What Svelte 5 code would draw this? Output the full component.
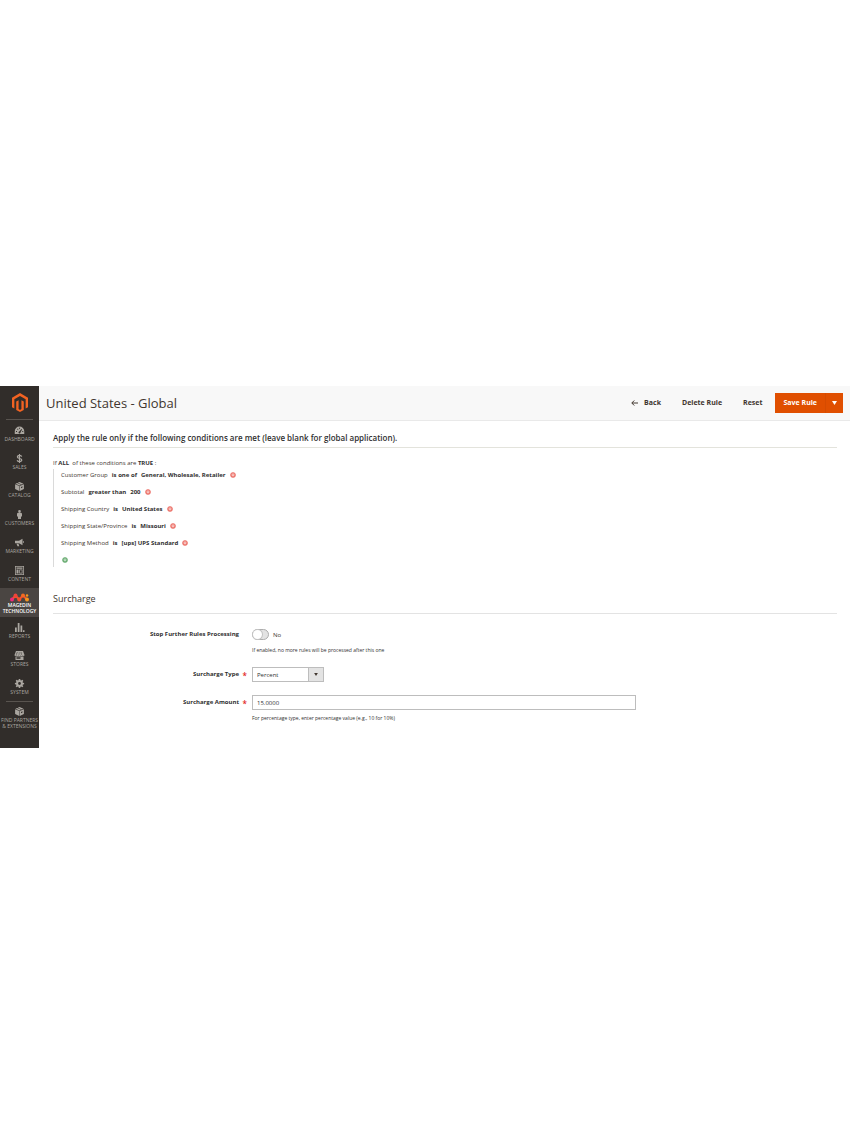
<script lang="ts">
  const menu = [
    { id: "dashboard", lines: ["Dashboard"] },
    { id: "sales", lines: ["Sales"] },
    { id: "catalog", lines: ["Catalog"] },
    { id: "customers", lines: ["Customers"] },
    { id: "marketing", lines: ["Marketing"] },
    { id: "content", lines: ["Content"] },
    { id: "magedin", lines: ["Magedin", "Technology"], active: true },
    { id: "reports", lines: ["Reports"] },
    { id: "stores", lines: ["Stores"] },
    { id: "system", lines: ["System"] },
    { id: "partners", lines: ["Find Partners", "& Extensions"] },
  ];

  let conditions = $state([
    { attribute: "Customer Group", operator: "is one of", value: "General, Wholesale, Retailer" },
    { attribute: "Subtotal", operator: "greater than", value: "200" },
    { attribute: "Shipping Country", operator: "is", value: "United States" },
    { attribute: "Shipping State/Province", operator: "is", value: "Missouri" },
    { attribute: "Shipping Method", operator: "is", value: "[ups] UPS Standard" },
  ]);
  let stopProcessing = $state(false);
  let surchargeType = $state("percent");
  let amount = $state("15.0000");

  function removeCondition(i: number) {
    conditions = conditions.filter((_, idx) => idx !== i);
  }
</script>

{#snippet menuIcon(id: string)}
  <svg class="menu-icon" viewBox="0 0 20 18" aria-hidden="true">
    {#if id === "dashboard"}
      <path fill-rule="evenodd" d="M10 1a9.500 9.500 0 0 0-9.500 9.500V16h19v-5.500A9.500 9.500 0 0 0 10 1zM3 10h2v2H3zM5.500 5.500h2v2h-2zM9 3.500h2v2H9zM15.500 10h2v2h-2zM14 6l1.200 1-3.200 5.500a2 2 0 1 1-2.500-1.500z" />
    {:else if id === "sales"}
      <path class="line" d="M14.500 5.200C14 3.500 12.500 2.800 10 2.800S5.800 3.800 5.800 5.800 8 8.500 10 9s4.500 1 4.500 3.200-2 3-4.500 3-4.300-.9-4.700-2.700M10 0v18" />
    {:else if id === "catalog" || id === "partners"}
      <path d="M10 0l8 3.500-3.600 1.400L6.600 1.600zM5.300 2.200l7.800 3.400L10 7 2 3.700zM1.200 4.600l8.300 3.600V18l-8.300-4zM10.500 8.200l8.300-3.600V14l-8.300 4zM13 10v2.500l3-1.400V8.600z" fill-rule="evenodd" />
    {:else if id === "customers"}
      <path d="M10 0a2.700 2.700 0 1 1 0 5.400A2.700 2.700 0 0 1 10 0zM7 5.500h6L15 7v6h-2v5H7v-5H5V7z" />
    {:else if id === "marketing"}
      <path d="M1 5.500h8l7-4v13l-7-4H1zM17 6c2.500 0 2.500 4 0 4zM4 11.500h4l1.500 5H6z" />
    {:else if id === "content"}
      <path fill-rule="evenodd" d="M1 0h18v18H1zM2.500 1.500v15h15v-15zM4 3h12v2.500H4zM4 7h4v8H4zM9.500 7H16v8H9.500zM11 8.500v5h3.500v-5z" />
    {:else if id === "reports"}
      <path d="M1 9h3.500v9H1zM6.500 0H10v18H6.500zM12 5h3.500v13H12zM17 14.500h3V18h-3z" />
    {:else if id === "stores"}
      <path fill-rule="evenodd" d="M3 0h14l3 8c0 2-3 2.500-4 .8-1 1.700-3 1.700-4 0-1 1.700-3 1.700-4 0-1 1.700-3 1.700-4 0C3 10.500 0 10 0 8zM5 2L3.500 7.500h1L6 2zM9 2l-.5 5.500h1V2zM12.500 2l.5 5.500h1L13.500 2zM2 11h16v7H2zM4 12.500v3h8v-3z" />
    {:else if id === "system"}
      <path fill-rule="evenodd" d="M8.600 0h2.800l.5 2.500 1.500.6L15.600 1.700l2 2-1.500 2.100.6 1.500 2.500.5v2.600l-2.500.5-.6 1.500 1.500 2.200-2 2-2.200-1.500-1.500.6-.5 2.300H8.600l-.5-2.300-1.500-.6-2.200 1.500-2-2 1.500-2.200-.6-1.500L.8 10.400V7.800l2.500-.5.6-1.500-1.500-2.100 2-2 2.200 1.400 1.500-.6zM10 6.200a2.800 2.800 0 1 0 0 5.600 2.800 2.800 0 0 0 0-5.600z" />
    {/if}
  </svg>
{/snippet}

<div class="admin">
  <aside class="sidebar">
    <a class="logo" href="#home" aria-label="Home">
      <svg viewBox="0 0 34 40" aria-hidden="true">
        <path d="M17 0l17 10v20l-5 3V13L17 6 5 13v20l-5-3V10zM14 15v19l3 1.700 3-1.700V15l5 3v18l-8 4-8-4V18z" />
      </svg>
    </a>
    <nav class="menu">
      {#each menu as item}
        <a class="menu-item {item.id}" class:active={item.active} href="#{item.id}">
          {#if item.id === "magedin"}
            <svg class="brand-icon" viewBox="0 0 38 18" aria-hidden="true">
              <path d="M4 13l7-8 7.500 8L26 5l8 8" fill="none" stroke="#f4512c" stroke-width="4" />
              <circle cx="4" cy="13" r="4" fill="#ee2a7b" />
              <circle cx="11" cy="5" r="4" fill="#f0443a" />
              <circle cx="18.500" cy="13" r="4" fill="#f4512c" />
              <circle cx="26" cy="5" r="4" fill="#f26a21" />
              <circle cx="34" cy="5" r="2.500" fill="#f7941d" />
              <circle cx="34" cy="13" r="4" fill="#f7941d" />
            </svg>
          {:else}
            {@render menuIcon(item.id)}
          {/if}
          {#each item.lines as line}
            <span>{line}</span>
          {/each}
        </a>
      {/each}
    </nav>
  </aside>

  <div class="page">
    <header class="page-header">
      <h1>United States - Global</h1>
      <div class="actions">
        <button class="action">
          <svg class="back-icon" viewBox="0 0 14 12" aria-hidden="true">
            <path d="M6.500 1L1.500 6l5 5M2 6h12" />
          </svg>
          Back
        </button>
        <button class="action">Delete Rule</button>
        <button class="action">Reset</button>
        <div class="split">
          <button class="save">Save Rule</button>
          <button class="save-toggle" aria-label="More save options">
            <svg viewBox="0 0 10 8" aria-hidden="true"><path d="M0 0h10L5 8z" /></svg>
          </button>
        </div>
      </div>
    </header>

    <main>
      <section class="conditions">
        <h2 class="legend">
          Apply the rule only if the following conditions are met (leave blank for global application).
        </h2>
        <p class="rule-root">
          If <a href="#aggregator">ALL</a>&nbsp; of these conditions are <a href="#value">TRUE</a> :
        </p>
        <ul class="rules">
          {#each conditions as condition, i}
            <li>
              <span>{condition.attribute}</span>
              <a href="#operator">{condition.operator}</a>
              <a href="#value">{condition.value}</a>
              <button class="round remove" aria-label="Remove" onclick={() => removeCondition(i)}>
                <svg viewBox="0 0 12 12" aria-hidden="true">
                  <circle cx="6" cy="6" r="5" />
                  <path d="M3.500 4.500h5M4 8l2-2 2 2" />
                </svg>
              </button>
            </li>
          {/each}
          <li>
            <button class="round add" aria-label="Add">
              <svg viewBox="0 0 12 12" aria-hidden="true">
                <circle cx="6" cy="6" r="5" />
                <path d="M3.500 4.500h5M4 8l2-2 2 2" />
              </svg>
            </button>
          </li>
        </ul>
      </section>

      <section class="surcharge">
        <h2 class="title">Surcharge</h2>

        <div class="field">
          <label class="label" for="stop">Stop Further Rules Processing</label>
          <div class="control">
            <div class="toggle">
              <input id="stop" type="checkbox" bind:checked={stopProcessing} />
              <span>{stopProcessing ? "Yes" : "No"}</span>
            </div>
            <p class="note">If enabled, no more rules will be processed after this one</p>
          </div>
        </div>

        <div class="field">
          <label class="label required" for="type">Surcharge Type</label>
          <div class="control">
            <div class="select">
              <select id="type" bind:value={surchargeType}>
                <option value="percent">Percent</option>
                <option value="fixed">Fixed</option>
              </select>
              <svg viewBox="0 0 10 8" aria-hidden="true"><path d="M0 0h10L5 8z" /></svg>
            </div>
          </div>
        </div>

        <div class="field">
          <label class="label required" for="amount">Surcharge Amount</label>
          <div class="control">
            <input id="amount" class="text" type="text" bind:value={amount} />
            <p class="note">For percentage type, enter percentage value (e.g., 10 for 10%)</p>
          </div>
        </div>
      </section>
    </main>
  </div>
</div>

<style>
  :global(body) {
    background: #fff;
  }

  .admin {
    display: flex;
    margin-top: 386px;
    font-family: "Open Sans", "Noto Sans", sans-serif;
    font-size: 6px;
    line-height: 8px;
    color: #41362f;
  }

  a {
    color: inherit;
    text-decoration: none;
  }

  button,
  input,
  select {
    font-family: inherit;
    font-size: inherit;
    line-height: inherit;
    color: inherit;
    margin: 0;
    box-sizing: border-box;
  }

  button {
    border: 0;
    padding: 0;
    background: none;
    cursor: pointer;
  }

  h1,
  h2,
  p,
  ul {
    margin: 0;
    padding: 0;
  }

  .sidebar {
    flex: none;
    width: 39px;
    padding-bottom: 19px;
    background: #312d2a;
  }

  .logo {
    display: flex;
    align-items: center;
    justify-content: center;
    height: 34px;
    margin: 0 6px;
    border-bottom: 1px solid #59544f;
    box-sizing: border-box;
  }

  .logo svg {
    width: 16px;
    height: 19px;
    fill: #f26322;
  }

  .menu-item {
    display: flex;
    flex-direction: column;
    align-items: center;
    padding: 6px 0;
    font-size: 5px;
    line-height: 6px;
    text-transform: uppercase;
    white-space: nowrap;
    color: #aaa6a0;
  }

  .menu-icon {
    width: 11px;
    height: 9px;
    margin-bottom: 1px;
    fill: #aaa6a0;
  }

  .menu-icon .line {
    fill: none;
    stroke: #aaa6a0;
    stroke-width: 2.4;
  }

  .brand-icon {
    width: 19px;
    height: 9px;
  }

  .active {
    padding: 5px 0 3px;
    background: #4a4542;
    color: #fff;
    font-weight: 600;
  }

  .partners {
    margin: 0 6px;
    padding: 5px 0 0;
    border-top: 1px solid #59544f;
  }

  .page {
    flex: 1;
    min-width: 0;
  }

  .page-header {
    display: flex;
    align-items: center;
    justify-content: space-between;
    padding: 7px;
    background: #f8f8f8;
    border-bottom: 1px solid #e9e9e9;
  }

  h1 {
    font-size: 13px;
    font-weight: 400;
    line-height: 20px;
  }

  .actions {
    display: flex;
    align-items: center;
    font-size: 7px;
    font-weight: 700;
  }

  .action {
    display: flex;
    align-items: center;
    gap: 6px;
    margin-right: 21px;
    font-weight: 700;
  }

  .action:nth-child(3) {
    margin-right: 13px;
  }

  .back-icon {
    width: 7px;
    height: 6px;
    fill: none;
    stroke: #41362f;
    stroke-width: 2;
  }

  .split {
    display: flex;
    height: 20px;
    background: #e04f00;
    color: #fff;
  }

  .save {
    padding: 0 8px;
    font-weight: 700;
  }

  .save-toggle {
    display: flex;
    align-items: center;
    justify-content: center;
    width: 18px;
    border-left: 1px solid #d64b00;
  }

  .save-toggle svg {
    width: 5px;
    height: 4px;
    fill: #fff;
  }

  main {
    padding: 0 13px 0 14px;
  }

  .legend {
    padding: 12px 0 4px;
    font-size: 8px;
    font-weight: 600;
    line-height: 10px;
    color: #303030;
    border-bottom: 1px solid #e3e3dc;
  }

  .rule-root {
    margin-top: 11px;
  }

  .rule-root a,
  .rules a {
    font-weight: 700;
    color: #303030;
  }

  .rules {
    list-style: none;
    margin-top: 2px;
    padding-left: 7px;
    border-left: 1px solid #dadada;
  }

  .rules li {
    display: flex;
    align-items: center;
    gap: 4px;
    height: 8px;
    padding: 2px 0 7px;
  }

  .rules li:last-child {
    padding-left: 1px;
    padding-bottom: 3px;
  }

  .round {
    display: flex;
  }

  .round svg {
    width: 6px;
    height: 6px;
    stroke-width: 1;
    fill: none;
  }

  .remove circle {
    fill: #f08a82;
    stroke: #e8564c;
  }

  .add circle {
    fill: #7db884;
    stroke: #4b9a55;
  }

  .round path {
    stroke: #fff;
  }

  .title {
    margin-top: 26px;
    padding-bottom: 8px;
    font-size: 9px;
    font-weight: 400;
    line-height: 12px;
    border-bottom: 1px solid #e3e3e3;
  }

  .surcharge {
    padding-bottom: 25px;
  }

  .field {
    display: flex;
    margin-top: 13px;
  }

  .label {
    position: relative;
    width: 25%;
    box-sizing: border-box;
    padding-right: 10px;
    font-weight: 700;
    line-height: 15px;
    text-align: right;
    color: #303030;
  }

  .required::after {
    content: "*";
    position: absolute;
    right: 2px;
    font-size: 8px;
    font-weight: 600;
    line-height: 17px;
    color: #e22626;
  }

  .control {
    width: 49%;
    margin-left: 3px;
  }

  .toggle {
    display: flex;
    align-items: center;
    gap: 4px;
    height: 15px;
  }

  .toggle input {
    appearance: none;
    width: 17px;
    height: 11px;
    border: 1px solid #adadad;
    border-radius: 6px;
    background: #e3e3e3;
  }

  .toggle input::before {
    content: "";
    display: block;
    width: 9px;
    height: 9px;
    border-radius: 50%;
    background: #fff;
    box-shadow: 0 0 0 1px #c4c4c4;
  }

  .toggle input:checked {
    background: #79a22e;
  }

  .toggle input:checked::before {
    margin-left: 6px;
  }

  .note {
    margin-top: 4px;
    font-size: 5px;
    line-height: 8px;
    color: #303030;
  }

  .select {
    display: flex;
    align-items: center;
    position: relative;
    width: 72px;
  }

  .select select {
    appearance: none;
    width: 100%;
    height: 15px;
    padding: 0 18px 0 4px;
    border: 1px solid #bdbdbd;
    border-radius: 0;
    background: linear-gradient(to left, #e3e3e3 14px, #bdbdbd 14px, #bdbdbd 15px, #fff 15px);
    color: #303030;
  }

  .select svg {
    position: absolute;
    right: 6px;
    width: 4px;
    height: 3px;
    fill: #41362f;
    pointer-events: none;
  }

  .text {
    display: block;
    width: 100%;
    height: 15px;
    padding: 0 4px;
    border: 1px solid #bdbdbd;
    color: #303030;
  }
</style>
